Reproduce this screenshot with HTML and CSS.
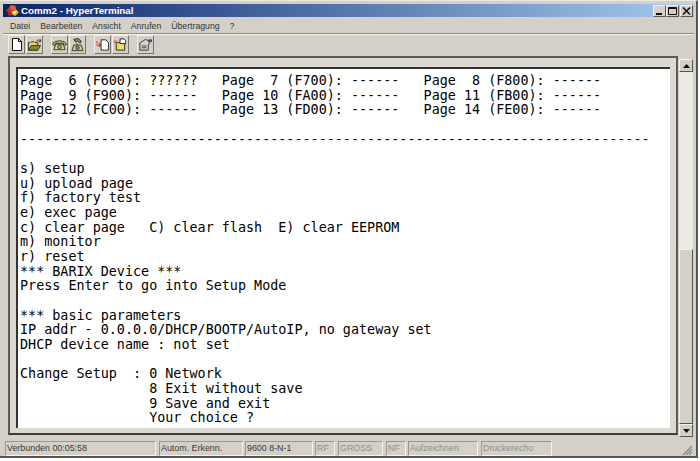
FILE: index.html
```html
<!DOCTYPE html>
<html lang="de">
<head>
<meta charset="utf-8">
<title>Comm2 - HyperTerminal</title>
<link rel="stylesheet" href="styles.css">
</head>
<body>
<div class="window">
  <header class="titlebar">
    <svg class="appicon" width="15" height="13" viewBox="0 0 16 14">
      <path d="M1 7 5 3l4 3-3 5z" fill="#d62a1c"/>
      <path d="M6 1l5 1 1 4-4 1-3-3z" fill="#e8623a"/>
      <path d="M7 8l5-2 3 3-4 4-4-2z" fill="#e3b52a"/>
      <path d="M3 9l4 1-1 3-3-1z" fill="#b81f18"/>
      <circle cx="10" cy="9" r="1.500" fill="#fff2a0"/>
    </svg>
    <span class="title">Comm2 - HyperTerminal</span>
    <div class="winbtns">
      <span class="winbtn"><svg width="11" height="10" viewBox="0 0 11 10"><rect x="2" y="7" width="6" height="2" fill="#111"/></svg></span>
      <span class="winbtn"><svg width="11" height="10" viewBox="0 0 11 10"><path d="M1.500 1.500h8v7h-8zM1.500 2.500h8" fill="none" stroke="#111"/></svg></span>
      <span class="winbtn close"><svg width="11" height="10" viewBox="0 0 11 10"><path d="M2 1.500l7 7M9 1.500l-7 7" stroke="#111" stroke-width="1.600"/></svg></span>
    </div>
  </header>
  <nav class="menubar">
    <span>Datei</span><span>Bearbeiten</span><span>Ansicht</span><span>Anrufen</span><span>Übertragung</span><span>?</span>
  </nav>
  <div class="toolbar">
    <div class="tgroup">
      <span class="tbtn"><svg width="14" height="15" viewBox="0 0 14 15"><path d="M2.500 1.500h6l3 3v9h-9z" fill="#fff" stroke="#111"/><path d="M8.500 1.500v3h3" fill="none" stroke="#111"/></svg></span>
      <span class="tbtn"><svg width="16" height="14" viewBox="0 0 16 14"><path d="M1.500 12.500v-8h2l1-1h3l1 1h3v8z" fill="#e6d85a" stroke="#333"/><path d="M1.500 12.500l3-5h10l-3 5z" fill="#8c8a20" stroke="#333"/><path d="M10 3q2-2.500 4-1M14.500 1v2.500h-2.500" fill="none" stroke="#333"/></svg></span>
    </div>
    <div class="tgroup">
      <span class="tbtn"><svg width="16" height="14" viewBox="0 0 16 14"><path d="M1 5q7-5 14 0v2h-3V5H4v2H1z" fill="#d8d060" stroke="#333"/><path d="M4 6h8l2 6H2z" fill="#e0da6a" stroke="#333"/><circle cx="8" cy="9" r="2" fill="#a8a8d8" stroke="#333"/></svg></span>
      <span class="tbtn"><svg width="16" height="16" viewBox="0 0 16 16"><path d="M4 2l5-1 3 3-1 2-3-2-2 1z" fill="#8a8a50" stroke="#333"/><path d="M7 6l1 2" stroke="#333"/><path d="M4 8h8l2 6H2z" fill="#d8d060" stroke="#333"/><circle cx="8" cy="11" r="1.800" fill="#909090" stroke="#333"/></svg></span>
    </div>
    <div class="tgroup">
      <span class="tbtn"><svg width="16" height="15" viewBox="0 0 16 15"><path d="M6.500 2.500h5l3 3v8h-8z" fill="#fff" stroke="#222"/><path d="M1 8h5M4 6l2 2-2 2M1 5h2" fill="none" stroke="#d03030" stroke-width="1.200"/></svg></span>
      <span class="tbtn"><svg width="16" height="15" viewBox="0 0 16 15"><path d="M3.500 5.500h9v8h-9z" fill="#efe060" stroke="#222"/><path d="M7.500 1.500h4l2 2v3h-6z" fill="#fff" stroke="#222"/><path d="M1 3l3 3M4 3L1 6" stroke="#c03020"/></svg></span>
    </div>
    <div class="tgroup">
      <span class="tbtn"><svg width="16" height="15" viewBox="0 0 16 15"><path d="M2 6l6-4 4 2v3l-1 1v5.500H2z" fill="#d8d6cc" stroke="#333"/><path d="M4 9h5M4 11h5" stroke="#333"/><path d="M11 2h4v3h-4z" fill="#3a4a98"/></svg></span>
    </div>
  </div>
  <main class="client">
    <div class="terminal">
<pre class="screen">Page  6 (F600): ??????   Page  7 (F700): ------   Page  8 (F800): ------
Page  9 (F900): ------   Page 10 (FA00): ------   Page 11 (FB00): ------
Page 12 (FC00): ------   Page 13 (FD00): ------   Page 14 (FE00): ------

------------------------------------------------------------------------------

s) setup
u) upload page
f) factory test
e) exec page
c) clear page   C) clear flash  E) clear EEPROM
m) monitor
r) reset
*** BARIX Device ***
Press Enter to go into Setup Mode

*** basic parameters
IP addr - 0.0.0.0/DHCP/BOOTP/AutoIP, no gateway set
DHCP device name : not set

Change Setup  : 0 Network
                8 Exit without save
                9 Save and exit
                Your choice ?</pre>
    </div>
    <div class="scrollbar">
      <span class="sbtn"><svg width="9" height="6" viewBox="0 0 9 6"><path d="M4.500 1 8 5H1z" fill="#111"/></svg></span>
      <div class="track"></div>
      <div class="thumb"></div>
      <span class="sbtn"><svg width="9" height="6" viewBox="0 0 9 6"><path d="M1 1h7L4.500 5z" fill="#111"/></svg></span>
    </div>
  </main>
  <footer class="statusbar">
    <span class="panel p1">Verbunden 00:05:58</span>
    <span class="panel p2">Autom. Erkenn.</span>
    <span class="panel p3">9600 8-N-1</span>
    <span class="panel off p4">RF</span>
    <span class="panel off p5">GROSS</span>
    <span class="panel off p6">NF</span>
    <span class="panel off p7">Aufzeichnen</span>
    <span class="panel off p8">Druckerecho</span>
    <svg class="grip" width="12" height="12" viewBox="0 0 12 12"><path d="M11 2 2 11M11 5 5 11M11 8l-3 3" stroke="#8a8880" stroke-width="1.200"/></svg>
  </footer>
</div>
</body>
</html>
```
FILE: styles.css
```css
html, body {
  margin: 0;
  padding: 0;
  background: #fff;
}
.window {
  width: 698px;
  height: 458px;
  box-sizing: border-box;
  padding: 3px 2px 0 3px;
  background: #d4d0c8;
  border-right: 2px solid #55544e;
  border-bottom: 2px solid #55544e;
  border-top: 1px solid #ece9e2;
  display: flex;
  flex-direction: column;
  font-family: "Liberation Sans", Arial, sans-serif;
  overflow: hidden;
}
.titlebar {
  height: 13px;
  flex: none;
  display: flex;
  align-items: center;
  padding-left: 2px;
  background: linear-gradient(90deg, #0a246a 0%, #a6caf0 100%);
}
.appicon { flex: none; }
.title {
  margin-left: 1px;
  font-size: 9.800px;
  font-weight: 700;
  color: #fff;
}
.winbtns {
  margin-left: auto;
  display: flex;
  gap: 0;
  padding-right: 1px;
}
.winbtn {
  width: 13px;
  height: 12px;
  box-sizing: border-box;
  background: #d4d0c8;
  border: 1px solid;
  border-color: #f4f2ec #555 #555 #f4f2ec;
  display: flex;
}
.winbtn svg { display: block; }
.close { margin-left: 1px; }
.menubar {
  height: 17px;
  box-sizing: border-box;
  flex: none;
  display: flex;
  align-items: center;
  gap: 10px;
  padding: 1px 0 0 7px;
  font-size: 8.700px;
  color: #333;
  border-bottom: 1px solid #8e8c85;
}
.toolbar {
  height: 20px;
  box-sizing: border-box;
  flex: none;
  display: flex;
  gap: 8px;
  padding: 0 0 0 5px;
  border-top: 1px solid #f6f4ee;
}
.tgroup {
  display: flex;
  gap: 1px;
}
.tbtn {
  width: 17px;
  height: 19px;
  box-sizing: border-box;
  border: 1px solid;
  border-color: #f2f0ea #77756e #77756e #f2f0ea;
  display: flex;
  align-items: center;
  justify-content: center;
}
.client {
  flex: 1;
  min-height: 0;
  display: flex;
  margin: 2px 0 2px 0;
  padding-left: 5px;
}
.terminal {
  flex: 1;
  min-width: 0;
  box-sizing: border-box;
  border: 2px solid;
  border-color: #5c5a54 #5c5a54 #3c3b37 #5c5a54;
  padding: 9px 6px 5px 6px;
  margin-bottom: 2px;
  background: #dcd9d2;
}
.screen {
  margin: 0;
  height: 100%;
  box-sizing: border-box;
  background: #fff;
  border-left: 2px solid #333;
  border-top: 2px solid #333;
  padding: 5px 0 0 2px;
  font-family: "DejaVu Sans Mono", "Liberation Mono", monospace;
  font-size: 13.420px;
  line-height: 14.670px;
  color: #000;
  overflow: hidden;
}
.scrollbar {
  width: 14px;
  flex: none;
  margin: 3px 1px 0 1px;
  display: flex;
  flex-direction: column;
  background: #ebe9e3;
}
.sbtn {
  height: 11px;
  flex: none;
  background: #d4d0c8;
  border: 1px solid;
  border-color: #f4f2ec #555 #555 #f4f2ec;
  display: flex;
  align-items: center;
  justify-content: center;
}
.track { height: 177px; flex: none; }
.thumb {
  flex: 1;
  box-sizing: border-box;
  background: #d4d0c8;
  border: 1px solid;
  border-color: #f4f2ec #555 #555 #f4f2ec;
}
.statusbar {
  height: 15px;
  flex: none;
  display: flex;
  align-items: stretch;
  margin-top: 2px;
  padding-left: 2px;
  font-size: 8.900px;
  color: #3a3a3a;
  position: relative;
}
.panel {
  box-sizing: border-box;
  border: 1px solid;
  border-color: #9a9890 #f4f2ec #f4f2ec #9a9890;
  padding: 1px 0 0 1px;
  margin-right: 3px;
  white-space: nowrap;
  overflow: hidden;
}
.off { color: #908e88; }
.p1 { width: 151px; }
.p2 { width: 84px; margin-right: 2px; }
.p3 { width: 68px; margin-right: 2px; }
.p4 { width: 20px; }
.p5 { width: 45px; }
.p6 { width: 20px; margin-right: 2px; }
.p7 { width: 70px; }
.p8 { width: 71px; }
.grip {
  position: absolute;
  right: 1px;
  bottom: 0;
}
```
